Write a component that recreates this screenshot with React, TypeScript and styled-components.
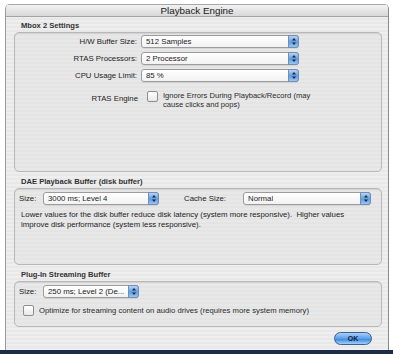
import { createGlobalStyle } from 'styled-components';
import styled from 'styled-components';

const GlobalStyle = createGlobalStyle`
  html, body {
    margin: 0;
    padding: 0;
    background: #ffffff;
  }
  * {
    box-sizing: border-box;
  }
`;

const App = () => {
  return (
    <>
      <GlobalStyle />
      <Screen>
        <Window>
          <TitleBar>Playback Engine</TitleBar>
          <Body>
            <GroupLabel>Mbox 2 Settings</GroupLabel>
            <GroupBox $height={140}>
              <FormGrid>
                <FieldLabel>H/W Buffer Size:</FieldLabel>
                <Popup $width={158}>
                  <span>512 Samples</span>
                  <Stepper />
                </Popup>
                <FieldLabel>RTAS Processors:</FieldLabel>
                <Popup $width={158}>
                  <span>2 Processor</span>
                  <Stepper />
                </Popup>
                <FieldLabel>CPU Usage Limit:</FieldLabel>
                <Popup $width={158}>
                  <span>85 %</span>
                  <Stepper />
                </Popup>
              </FormGrid>
              <EngineRow>
                <EngineLabel>RTAS Engine</EngineLabel>
                <Check />
                <CheckText>
                  Ignore Errors During Playback/Record (may
                  <br />
                  cause clicks and pops)
                </CheckText>
              </EngineRow>
            </GroupBox>

            <GroupLabel>DAE Playback Buffer (disk buffer)</GroupLabel>
            <GroupBox $height={77}>
              <SizeRow>
                <SmallLabel>Size:</SmallLabel>
                <Popup $width={116}>
                  <span>3000 ms; Level 4</span>
                  <Stepper />
                </Popup>
                <CacheLabel>Cache Size:</CacheLabel>
                <Popup $width={128}>
                  <span>Normal</span>
                  <Stepper />
                </Popup>
              </SizeRow>
              <Note>
                Lower values for the disk buffer reduce disk latency (system more responsive).&nbsp; Higher values
                <br />
                improve disk performance (system less responsive).
              </Note>
            </GroupBox>

            <GroupLabel>Plug-In Streaming Buffer</GroupLabel>
            <GroupBox $height={46}>
              <SizeRow>
                <SmallLabel>Size:</SmallLabel>
                <Popup $width={96}>
                  <span>250 ms; Level 2 (De...</span>
                  <Stepper />
                </Popup>
              </SizeRow>
              <OptRow>
                <Check />
                <span>Optimize for streaming content on audio drives (requires more system memory)</span>
              </OptRow>
            </GroupBox>

            <Footer>
              <OkButton>OK</OkButton>
            </Footer>
          </Body>
        </Window>
        <Desktop />
      </Screen>
    </>
  );
};

export default App;

const Stepper = () => (
  <StepBox>
    <svg width="4" height="7" viewBox="0 0 4 7">
      <path d="M2 0 L4 2.5 L0 2.5 Z" fill="#1a2a44" />
      <path d="M2 7 L4 4.5 L0 4.5 Z" fill="#1a2a44" />
    </svg>
  </StepBox>
);

/* ---------------- styled-components ---------------- */

const Screen = styled.div`
  width: 393px;
  height: 354px;
  display: flex;
  flex-direction: column;
  background: #ffffff;
  overflow: hidden;
  font-family: 'Liberation Sans', Arial, sans-serif;
  color: #1c1c1c;
`;

const Window = styled.div`
  margin: 4px 4px 0 5px;
  height: 346px;
  display: flex;
  flex-direction: column;
  border-left: 1px solid #9a9a9a;
  border-right: 1px solid #8a8a8a;
  border-radius: 5px 5px 0 0;
  overflow: hidden;
  background: repeating-linear-gradient(
    to bottom,
    #eeeeee 0px,
    #eeeeee 2px,
    #e8e8e8 2px,
    #e8e8e8 4px
  );
`;

const TitleBar = styled.div`
  height: 13px;
  flex: none;
  display: flex;
  align-items: center;
  justify-content: center;
  font-size: 9.8px;
  color: #202020;
  border-top: 1px solid #a8a8a8;
  border-bottom: 1px solid #a4a4a4;
  background: linear-gradient(to bottom, #f2f2f2, #d8d8d8);
`;

const Body = styled.div`
  flex: 1;
  display: flex;
  flex-direction: column;
  padding: 3px 6px 0 8px;
`;

const GroupLabel = styled.div`
  font-size: 7.6px;
  font-weight: 700;
  color: #333333;
  padding-left: 7px;
  height: 11px;
  line-height: 11px;
  margin-bottom: 1px;
`;

const GroupBox = styled.div<{ $height: number }>`
  height: ${({ $height }) => $height}px;
  border: 1px solid #b8b8b8;
  border-radius: 5px;
  background: rgba(220, 220, 220, 0.3);
  box-shadow: inset 0 1px 0 #d2d2d2;
  margin-bottom: 4px;
  display: flex;
  flex-direction: column;
  padding: 2px 4px;
`;

const FormGrid = styled.div`
  display: grid;
  grid-template-columns: 118px auto;
  column-gap: 4px;
  row-gap: 4px;
  align-items: center;
`;

const FieldLabel = styled.div`
  font-size: 7.8px;
  text-align: right;
`;

const Popup = styled.div<{ $width: number }>`
  width: ${({ $width }) => $width}px;
  height: 13px;
  display: flex;
  align-items: center;
  justify-content: space-between;
  padding-left: 4px;
  font-size: 7.8px;
  color: #1c1c1c;
  background: linear-gradient(to bottom, #ffffff, #f2f2f2);
  border: 1px solid #9c9c9c;
  border-radius: 3px;
  box-shadow: 0 1px 0 rgba(0, 0, 0, 0.08);

  span {
    white-space: nowrap;
    overflow: hidden;
  }
`;

const StepBox = styled.div`
  width: 11px;
  height: 13px;
  margin: -1px -1px 0 0;
  flex: none;
  display: flex;
  align-items: center;
  justify-content: center;
  border-radius: 0 3px 3px 0;
  border: 1px solid #6f8fb8;
  background: linear-gradient(to bottom, #b8d4f2, #5f9be0 55%, #9cc6f0);
`;

const EngineRow = styled.div`
  display: flex;
  align-items: flex-start;
  margin-top: 9px;
`;

const EngineLabel = styled.div`
  width: 128px;
  font-size: 7.8px;
  text-align: right;
  padding-top: 3px;
  padding-right: 9px;
`;

const Check = styled.div`
  width: 11px;
  height: 11px;
  flex: none;
  border: 1px solid #8e8e8e;
  border-radius: 2px;
  background: linear-gradient(to bottom, #ffffff, #e8e8e8);
  margin-right: 5px;
`;

const CheckText = styled.div`
  font-size: 7.6px;
  line-height: 9px;
  color: #2a2a2a;
`;

const SizeRow = styled.div`
  display: flex;
  align-items: center;
  height: 15px;
`;

const SmallLabel = styled.div`
  font-size: 7.8px;
  width: 24px;
`;

const CacheLabel = styled.div`
  font-size: 7.8px;
  margin-left: 25px;
  width: 59px;
`;

const Note = styled.div`
  font-size: 7.8px;
  line-height: 10px;
  margin-top: 4px;
  padding-left: 2px;
  color: #1c1c1c;
`;

const OptRow = styled.div`
  display: flex;
  align-items: center;
  margin-top: 6px;
  padding-left: 4px;
  font-size: 7.7px;
  color: #2a2a2a;
`;

const Footer = styled.div`
  display: flex;
  justify-content: flex-end;
  padding: 1px 10px 0 0;
`;

const OkButton = styled.div`
  width: 38px;
  height: 13px;
  border-radius: 7px;
  display: flex;
  align-items: center;
  justify-content: center;
  font-size: 7px;
  font-weight: 700;
  color: #10203a;
  border: 1px solid #3a5e96;
  background: linear-gradient(to bottom, #a9d0f5 0%, #5b9ee8 50%, #3f86dc 55%, #9fd0fa 100%);
`;

const Desktop = styled.div`
  flex: 1;
  background: #1e2c4a;
`;
